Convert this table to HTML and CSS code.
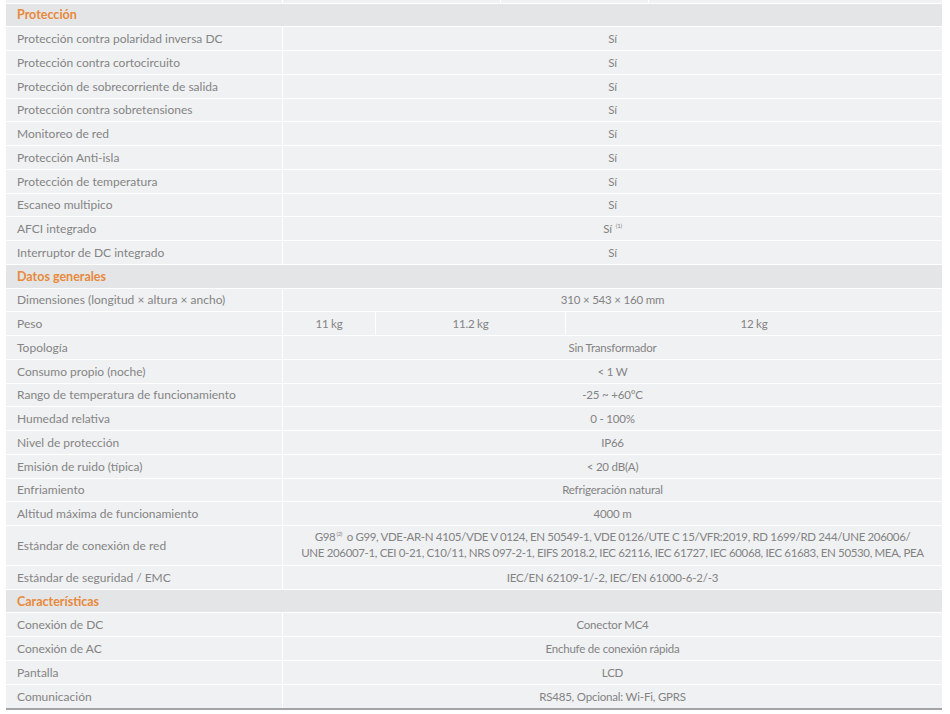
FILE: index.html
```html
<!DOCTYPE html>
<html lang="es">
<head>
<meta charset="utf-8">
<link rel="stylesheet" href="styles.css">
</head>
<body>
<div class="spec">
  <div class="row top"><div class="c l"></div><div class="c"></div><div class="c"></div><div class="c"></div></div>

  <div class="row head">Protección</div>
  <div class="row"><div class="c l">Protección contra polaridad inversa DC</div><div class="c v">Sí</div></div>
  <div class="row"><div class="c l">Protección contra cortocircuito</div><div class="c v">Sí</div></div>
  <div class="row"><div class="c l">Protección de sobrecorriente de salida</div><div class="c v">Sí</div></div>
  <div class="row"><div class="c l">Protección contra sobretensiones</div><div class="c v">Sí</div></div>
  <div class="row"><div class="c l">Monitoreo de red</div><div class="c v">Sí</div></div>
  <div class="row"><div class="c l">Protección Anti-isla</div><div class="c v">Sí</div></div>
  <div class="row"><div class="c l">Protección de temperatura</div><div class="c v">Sí</div></div>
  <div class="row"><div class="c l">Escaneo multipico</div><div class="c v">Sí</div></div>
  <div class="row"><div class="c l">AFCI integrado</div><div class="c v"><span>Sí<sup class="note">(1)</sup></span></div></div>
  <div class="row"><div class="c l">Interruptor de DC integrado</div><div class="c v">Sí</div></div>

  <div class="row head">Datos generales</div>
  <div class="row"><div class="c l">Dimensiones (longitud × altura × ancho)</div><div class="c v">310 × 543 × 160 mm</div></div>
  <div class="row split"><div class="c l">Peso</div><div class="c v">11 kg</div><div class="c v">11.2 kg</div><div class="c v">12 kg</div></div>
  <div class="row"><div class="c l">Topología</div><div class="c v">Sin Transformador</div></div>
  <div class="row"><div class="c l">Consumo propio (noche)</div><div class="c v">&lt; 1 W</div></div>
  <div class="row"><div class="c l">Rango de temperatura de funcionamiento</div><div class="c v">-25 ~ +60°C</div></div>
  <div class="row"><div class="c l">Humedad relativa</div><div class="c v">0 - 100%</div></div>
  <div class="row"><div class="c l">Nivel de protección</div><div class="c v">IP66</div></div>
  <div class="row"><div class="c l">Emisión de ruido (típica)</div><div class="c v">&lt; 20 dB(A)</div></div>
  <div class="row"><div class="c l">Enfriamiento</div><div class="c v">Refrigeración natural</div></div>
  <div class="row"><div class="c l">Altitud máxima de funcionamiento</div><div class="c v">4000 m</div></div>
  <div class="row tall"><div class="c l">Estándar de conexión de red</div><div class="c v dense">G98<sup class="note">(2)</sup> o G99, VDE-AR-N 4105/VDE V 0124, EN 50549-1, VDE 0126/UTE C 15/VFR:2019, RD 1699/RD 244/UNE 206006/<br>UNE 206007-1, CEI 0-21, C10/11, NRS 097-2-1, EIFS 2018.2, IEC 62116, IEC 61727, IEC 60068, IEC 61683, EN 50530, MEA, PEA</div></div>
  <div class="row"><div class="c l">Estándar de seguridad / EMC</div><div class="c v">IEC/EN 62109-1/-2, IEC/EN 61000-6-2/-3</div></div>

  <div class="row head">Características</div>
  <div class="row"><div class="c l">Conexión de DC</div><div class="c v">Conector MC4</div></div>
  <div class="row"><div class="c l">Conexión de AC</div><div class="c v">Enchufe de conexión rápida</div></div>
  <div class="row"><div class="c l">Pantalla</div><div class="c v">LCD</div></div>
  <div class="row last"><div class="c l">Comunicación</div><div class="c v">RS485, Opcional: Wi-Fi, GPRS</div></div>
</div>
</body>
</html>
```
FILE: styles.css
```css
html, body {
  margin: 0;
  padding: 0;
  background: #ffffff;
}

.spec {
  width: 936px;
  margin-left: 6px;
  font-family: "Lato", "Open Sans", sans-serif;
  font-size: 12px;
  color: #848484;
}

.row {
  display: grid;
  grid-template-columns: 276px 1fr;
  height: 23.76px;
  border-bottom: 1px solid #ffffff;
  box-sizing: border-box;
  background: #f0f1f3;
}

.row.top {
  height: 3.6px;
  grid-template-columns: 276px 218px 148px 1fr;
}

.row.split {
  grid-template-columns: 276px 93px 190px 1fr;
}

.row.tall {
  height: 39.8px;
}

.row.last {
  border-bottom: 2px solid #a3a4a6;
  height: 25px;
}

.row.head {
  display: flex;
  align-items: center;
  background: #e4e5e7;
  color: #e8893b;
  font-weight: 700;
  font-size: 12.5px;
  padding-left: 11px;
}

.c {
  display: flex;
  align-items: center;
  border-left: 1px solid #ffffff;
  min-width: 0;
}

.c.l {
  border-left: none;
  padding-left: 11px;
  white-space: nowrap;
}

.c.v {
  justify-content: center;
  text-align: center;
  font-size: 11.5px;
  color: #838383;
  letter-spacing: -0.2px;
}

.c.dense {
  font-size: 11.5px;
  letter-spacing: -0.35px;
  line-height: 16px;
  display: block;
  padding-top: 3px;
}

.note {
  font-size: 6px;
  position: relative;
  top: -5px;
  vertical-align: baseline;
  line-height: 0;
  margin-left: 4px;
}

.dense .note {
  margin-left: 1px;
  margin-right: 2px;
}
```
